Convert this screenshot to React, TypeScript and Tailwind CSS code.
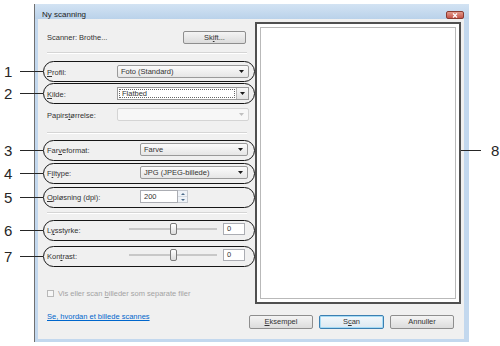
import { FC, ReactNode } from "react";

const Caret: FC<{ muted?: boolean }> = ({ muted }) => (
  <svg width="5" height="3" viewBox="0 0 5 3">
    <path d="M0 0h5L2.5 3z" fill={muted ? "#c0c0c0" : "#1a1a1a"} />
  </svg>
);

const Select: FC<{ value?: string; className: string; muted?: boolean }> = ({ value, className, muted }) => (
  <div
    className={`flex h-[13px] items-center justify-between rounded-[2px] border pl-[3px] pr-[4px] ${
      muted ? "border-[#d4d4d4] bg-[#f7f7f7]" : "border-[#9a9a9a] bg-linear-to-b from-[#fbfbfb] to-[#e6e6e6]"
    } ${className}`}
  >
    <span className="leading-none">{value}</span>
    <Caret muted={muted} />
  </div>
);

const Row: FC<{ className: string; label: ReactNode; labelW: string; children: ReactNode }> = ({
  className,
  label,
  labelW,
  children,
}) => (
  <div className={`flex items-center ${className}`}>
    <span className={`pt-[3px] leading-none ${labelW}`}>{label}</span>
    {children}
  </div>
);

const Slider = () => (
  <div className="flex items-center">
    <div className="relative ml-[-3px] h-[12px] w-[88px]">
      {/* track */}
      <div className="absolute left-0 right-0 top-[5px] h-[2px] border border-[#c8c8c8] bg-[#e8e8e8]" />
      {/* thumb */}
      <div className="absolute left-[41px] top-0 h-[12px] w-[7px] rounded-[2px] border border-[#7a7a7a] bg-linear-to-b from-white to-[#dcdcdc]" />
    </div>
    <div className="ml-[6px] flex h-[12px] w-[22px] items-center border border-[#abadb3] bg-white pl-[3px] leading-none">0</div>
  </div>
);

const Sep = ({ className }: { className: string }) => (
  <div className={`mr-[2px] h-[2px] border-t border-[#d5d5d5] border-b border-b-white ${className}`} />
);

const Callout: FC<{ n: string; className: string }> = ({ n, className }) => (
  <div className={`absolute left-[4px] flex h-[21px] items-center ${className}`}>
    <span className="w-[16px] text-[15px] leading-none text-[#262626]">{n}</span>
    <div className="h-px w-[23px] bg-[#262626]" />
    <div className="h-[21px] w-[212px] rounded-full border-[1.5px] border-[#161616]" />
  </div>
);

const App: FC = () => {
  return (
    <div className="relative h-[346px] w-[500px] overflow-hidden bg-white font-['Liberation_Sans',Arial,sans-serif] text-[7.5px] text-[#333]">
      {/* Dialog window */}
      <div className="ml-[34px] mt-[4px] flex h-[338px] w-[435px] flex-col border-l border-[#707070] bg-[#c3d8ee]">
        {/* Title bar */}
        <div className="flex h-[15px] items-end justify-between bg-linear-to-b from-[#d3e3f3] to-[#bad2ea] pl-[7px]">
          <span className="text-[8px] leading-none text-[#222]">Ny scanning</span>
          <div className="mr-[5px] flex h-[8px] w-[18px] items-center justify-center rounded-[2px] border border-[#8c3b30] bg-linear-to-b from-[#e29a8c] to-[#c4544a]">
            <svg width="6" height="5" viewBox="0 0 6 5">
              <path d="M1 0.5L5 4.5M5 0.5L1 4.5" stroke="white" strokeWidth="1.2" />
            </svg>
          </div>
        </div>

        {/* Body */}
        <div className="ml-[3px] mr-[5px] flex h-[320px] bg-[#f0f0f0]">
          {/* Left column */}
          <div className="flex w-[211px] flex-col pl-[9px]">
            <div className="mt-[12px] flex h-[13px] items-center justify-between pr-[3px]">
              <span className="leading-none">Scanner: Brothe...</span>
              <div className="flex h-[13px] w-[63px] items-center justify-center rounded-[2px] border border-[#8e8e8e] bg-linear-to-b from-[#f4f4f4] to-[#dcdcdc] leading-none">
                Sk<u>i</u>ft...
              </div>
            </div>
            <Sep className="mt-[8px]" />

            <Row className="mt-[11px] h-[13px]" labelW="w-[70px]" label={<><u>P</u>rofil:</>}>
              <Select value="Foto (Standard)" className="w-[132px]" />
            </Row>
            <Row className="mt-[9px] h-[13px]" labelW="w-[70px]" label={<><u>K</u>ilde:</>}>
              <div className="flex h-[13px] w-[132px] border border-[#9a9a9a] bg-white">
                <div className="m-[1px] flex flex-1 items-center border border-dotted border-[#666] pl-[2px] leading-none">
                  Flatbed
                </div>
                <div className="flex w-[12px] items-center justify-center border-l border-[#b5b5b5] bg-linear-to-b from-[#f8f8f8] to-[#e2e2e2]">
                  <Caret />
                </div>
              </div>
            </Row>
            <Row className="mt-[8px] h-[13px]" labelW="w-[70px]" label={<>Papirs<u>t</u>ørrelse:</>}>
              <Select className="w-[132px]" muted />
            </Row>
            <Sep className="mt-[11px]" />

            <Row className="mt-[9px] h-[13px]" labelW="w-[93px]" label={<>Far<u>v</u>eformat:</>}>
              <Select value="Farve" className="w-[108px]" />
            </Row>
            <Row className="mt-[10px] h-[13px]" labelW="w-[93px]" label={<>F<u>i</u>ltype:</>}>
              <Select value="JPG (JPEG-billede)" className="w-[108px]" />
            </Row>
            <Row className="mt-[11px] h-[13px]" labelW="w-[93px]" label={<><u>O</u>pløsning (dpi):</>}>
              <div className="flex h-[13px] w-[48px]">
                <div className="flex flex-1 items-center border border-[#abadb3] bg-white pl-[3px] leading-none">200</div>
                <div className="flex w-[10px] flex-col border-y border-r border-[#c5c9d0]">
                  <div className="flex flex-1 items-center justify-center border-b border-[#d6dbe2] bg-[#eef2f7]">
                    <svg width="4" height="2" viewBox="0 0 4 2"><path d="M0 2h4L2 0z" fill="#4a6a8a" /></svg>
                  </div>
                  <div className="flex flex-1 items-center justify-center bg-[#eef2f7]">
                    <svg width="4" height="2" viewBox="0 0 4 2"><path d="M0 0h4L2 2z" fill="#4a6a8a" /></svg>
                  </div>
                </div>
              </div>
            </Row>
            <Sep className="mt-[9px]" />

            <Row className="mt-[9px] h-[12px]" labelW="w-[85px]" label={<>L<u>y</u>sstyrke:</>}>
              <Slider />
            </Row>
            <Row className="mt-[14px] h-[12px]" labelW="w-[85px]" label={<>Kon<u>t</u>rast:</>}>
              <Slider />
            </Row>

            <div className="mt-[29px] flex items-center gap-[4px] text-[#a3a3a3]">
              <div className="h-[7px] w-[7px] border border-[#b8b8b8] bg-[#f6f6f6]" />
              <span className="leading-none">
                Vis eller scan <u>b</u>illeder som separate filer
              </span>
            </div>
            <a href="#" className="mt-[15px] leading-none text-[#0066cc] underline">
              Se, hvordan et billede scannes
            </a>
          </div>

          {/* Right column */}
          <div className="flex flex-1 flex-col">
            <div className="ml-[6px] mr-[3px] mt-[3px] h-[282px] border-2 border-[#505050] bg-white p-[3px]">
              <div className="h-full w-full border border-[#b9b9b9] bg-white" />
            </div>
            <div className="mt-[11px] flex gap-[6px]">
              <div className="flex h-[14px] w-[64px] items-center justify-center rounded-[2px] border border-[#8e8e8e] bg-linear-to-b from-[#f4f4f4] to-[#dcdcdc] leading-none">
                <u>E</u>ksempel
              </div>
              <div className="flex h-[14px] w-[65px] items-center justify-center rounded-[2px] border border-[#3c7fb1] bg-linear-to-b from-[#f2f8fc] to-[#dde8f0] leading-none shadow-[inset_0_0_0_1px_#a6dbf5]">
                S<u>c</u>an
              </div>
              <div className="flex h-[14px] w-[64px] items-center justify-center rounded-[2px] border border-[#8e8e8e] bg-linear-to-b from-[#f4f4f4] to-[#dcdcdc] leading-none">
                Annuller
              </div>
            </div>
          </div>
        </div>
      </div>

      {/* Callouts */}
      <Callout n="1" className="top-[61px]" />
      <Callout n="2" className="top-[83px]" />
      <Callout n="3" className="top-[140px]" />
      <Callout n="4" className="top-[163px]" />
      <Callout n="5" className="top-[187px]" />
      <Callout n="6" className="top-[220px]" />
      <Callout n="7" className="top-[246px]" />
      <div className="absolute left-[461px] top-[143px] flex h-[15px] items-center">
        <div className="h-px w-[20px] bg-[#262626]" />
        <span className="ml-[10px] text-[15px] leading-none text-[#262626]">8</span>
      </div>
    </div>
  );
};

export default App;
